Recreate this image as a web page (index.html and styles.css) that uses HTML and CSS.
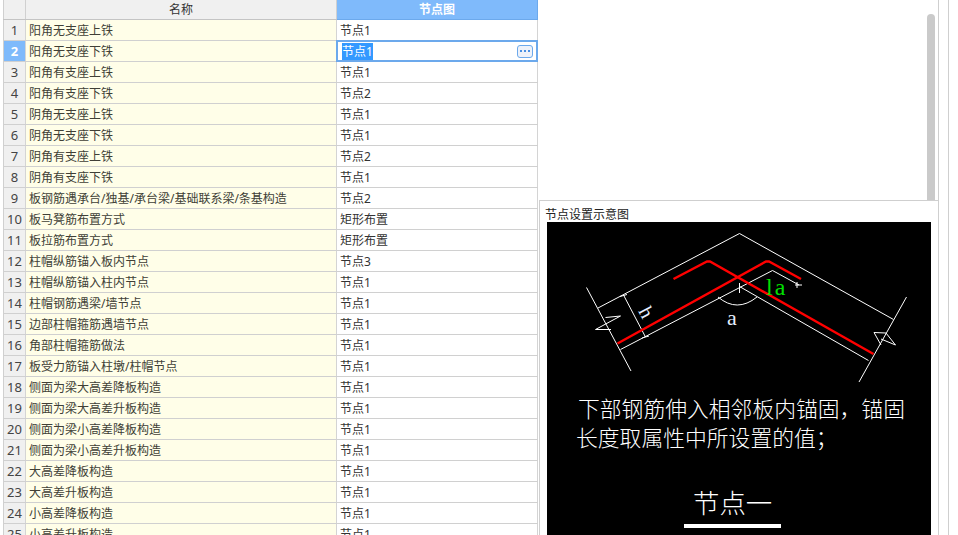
FILE: index.html
```html
<!DOCTYPE html>
<html lang="zh-CN">
<head>
    <meta charset="UTF-8">
    <title>节点设置</title>
    <link rel="stylesheet" href="styles.css">
</head>
<body>
    <div class="page">
        <table class="grid">
            <colgroup>
                <col class="col-num">
                <col class="col-name">
                <col class="col-node">
            </colgroup>
            <thead>
                <tr><th></th><th>名称</th><th class="active">节点图</th></tr>
            </thead>
            <tbody>
                <tr><td class="num">1</td><td class="name">阳角无支座上铁</td><td>节点1</td></tr>
                <tr>
                    <td class="num current">2</td>
                    <td class="name">阳角无支座下铁</td>
                    <td class="editing">
                        <div class="editor">
                            <span class="selected">节点1</span>
                            <span class="more"><i></i><i></i><i></i></span>
                        </div>
                    </td>
                </tr>
                <tr><td class="num">3</td><td class="name">阳角有支座上铁</td><td>节点1</td></tr>
                <tr><td class="num">4</td><td class="name">阳角有支座下铁</td><td>节点2</td></tr>
                <tr><td class="num">5</td><td class="name">阴角无支座上铁</td><td>节点1</td></tr>
                <tr><td class="num">6</td><td class="name">阴角无支座下铁</td><td>节点1</td></tr>
                <tr><td class="num">7</td><td class="name">阴角有支座上铁</td><td>节点2</td></tr>
                <tr><td class="num">8</td><td class="name">阴角有支座下铁</td><td>节点1</td></tr>
                <tr><td class="num">9</td><td class="name">板钢筋遇承台/独基/承台梁/基础联系梁/条基构造</td><td>节点2</td></tr>
                <tr><td class="num">10</td><td class="name">板马凳筋布置方式</td><td>矩形布置</td></tr>
                <tr><td class="num">11</td><td class="name">板拉筋布置方式</td><td>矩形布置</td></tr>
                <tr><td class="num">12</td><td class="name">柱帽纵筋锚入板内节点</td><td>节点3</td></tr>
                <tr><td class="num">13</td><td class="name">柱帽纵筋锚入柱内节点</td><td>节点1</td></tr>
                <tr><td class="num">14</td><td class="name">柱帽钢筋遇梁/墙节点</td><td>节点1</td></tr>
                <tr><td class="num">15</td><td class="name">边部柱帽箍筋遇墙节点</td><td>节点1</td></tr>
                <tr><td class="num">16</td><td class="name">角部柱帽箍筋做法</td><td>节点1</td></tr>
                <tr><td class="num">17</td><td class="name">板受力筋锚入柱墩/柱帽节点</td><td>节点1</td></tr>
                <tr><td class="num">18</td><td class="name">侧面为梁大高差降板构造</td><td>节点1</td></tr>
                <tr><td class="num">19</td><td class="name">侧面为梁大高差升板构造</td><td>节点1</td></tr>
                <tr><td class="num">20</td><td class="name">侧面为梁小高差降板构造</td><td>节点1</td></tr>
                <tr><td class="num">21</td><td class="name">侧面为梁小高差升板构造</td><td>节点1</td></tr>
                <tr><td class="num">22</td><td class="name">大高差降板构造</td><td>节点1</td></tr>
                <tr><td class="num">23</td><td class="name">大高差升板构造</td><td>节点1</td></tr>
                <tr><td class="num">24</td><td class="name">小高差降板构造</td><td>节点1</td></tr>
                <tr><td class="num">25</td><td class="name">小高差升板构造</td><td>节点1</td></tr>
            </tbody>
        </table>

        <div class="side">
            <div class="side-top">
                <div class="scroll-thumb"></div>
            </div>
            <div class="preview">
                <div class="preview-title">节点设置示意图</div>
                <svg class="drawing" viewBox="547 222 384 313" width="384" height="313">
                    <!-- slab outline -->
                    <g class="thin">
                        <polyline points="598,308 739.5,233.5 893.5,319.5"/>
                        <polyline points="620.5,349.5 772.5,270.5 799,285"/>
                        <polyline points="739.5,286.5 868.5,360.5"/>
                        <line x1="586.5" y1="287.5" x2="631" y2="371"/>
                        <line x1="906.5" y1="297" x2="859" y2="382"/>
                        <line x1="623.5" y1="295" x2="645.5" y2="337"/>
                        <polyline points="605.5,317.5 620.5,316 595.5,329.5 611,329.5"/>
                        <polyline points="881,345 874,332.5 886,333 895.5,345 881,339"/>
                        <path d="M718 297 Q737 313 757 297"/>
                        <line x1="620" y1="296.5" x2="627" y2="294.5"/>
                        <line x1="642" y1="338" x2="649" y2="336"/>
                        <line x1="795" y1="285" x2="802" y2="285"/>
                        <line x1="797" y1="282" x2="797" y2="288"/>
                        <line x1="739.5" y1="283" x2="739.5" y2="293"/>
                    </g>
                    <!-- rebar -->
                    <g class="rebar">
                        <polyline points="673.5,279 707,261.5 710,261.5 873.5,354"/>
                        <polyline points="617.5,343.5 766,261.5 769,261.5 801,279"/>
                    </g>
                    <text class="label" x="727" y="325">a</text>
                    <text class="label green" x="766" y="295">la</text>
                    <text class="label small" transform="translate(638 311) rotate(62)">h</text>
                    <text class="note" x="578" y="417">下部钢筋伸入相邻板内锚固，锚固</text>
                    <text class="note" x="576" y="446">长度取属性中所设置的值；</text>
                    <text class="title" x="693" y="513">节点一</text>
                    <rect class="bar" x="684" y="524" width="97" height="4"/>
                </svg>
            </div>
        </div>
        <div class="edge"></div>
    </div>
</body>
</html>
```

FILE: styles.css
```css
html, body {
    margin: 0;
    padding: 0;
    background: #fff;
}
.page {
    display: flex;
    align-items: flex-start;
    width: 958px;
    height: 535px;
    padding-left: 3px;
    box-sizing: border-box;
    overflow: hidden;
    font-family: "Noto Sans", "Noto Sans CJK SC", sans-serif;
    font-size: 12px;
    color: #333;
}

/* Grid */
.grid {
    flex: none;
    width: 535px;
    table-layout: fixed;
    border-collapse: collapse;
    border-left: 1px solid #d0d0d0;
}
.col-num {
    width: 22px;
}
.col-name {
    width: 311px;
}
.col-node {
    width: 201px;
}
.grid th {
    height: 19px;
    padding: 1px 0 0;
    background: #f0f0f0;
    border-right: 1px solid #d0d0d0;
    border-bottom: 1px solid #c4c4c4;
    font-weight: 400;
    line-height: 18px;
    box-sizing: border-box;
}
.grid th.active {
    background: #7fbafb;
    border-right-color: #6ca9ec;
    border-bottom-color: #6ca9ec;
    color: #fff;
    font-weight: 700;
}
.grid td {
    padding: 1px 0 0 3px;
    border-right: 1px solid #d4d4d4;
    border-bottom: 1px solid #d0d0d0;
    line-height: 19px;
    white-space: nowrap;
    overflow: hidden;
    box-sizing: content-box;
}
.grid tbody td {
    height: 19px;
}
.grid td.num {
    padding: 1px 0 0;
    background: #f0f0f0;
    text-align: center;
    font-size: 13px;
    color: #444;
}
.grid td.current {
    background: #7fbafb;
    color: #fff;
    font-weight: 700;
}
.grid td.name {
    background: #fffee8;
    color: #403f36;
}
.grid td.editing {
    padding: 0;
    overflow: visible;
    position: relative;
}
/* sits over the cell borders, so it is pulled out of the cell */
.editor {
    position: absolute;
    top: -1px;
    left: -1px;
    right: -1px;
    display: flex;
    align-items: center;
    justify-content: space-between;
    height: 18px;
    padding: 0 3px 0 4px;
    border: 2px solid #6ca9ec;
    background: #fff;
    line-height: 17px;
}
.selected {
    background: #3399ff;
    color: #fff;
}
.more {
    display: flex;
    align-items: center;
    justify-content: center;
    gap: 2px;
    width: 14px;
    height: 11px;
    background: #eef2fa;
    border: 1px solid #6ca9ec;
    border-radius: 3px;
}
.more i {
    width: 2px;
    height: 2px;
    background: #4a90e2;
}

/* Right side */
.side {
    flex: none;
    width: 400px;
    margin-left: 1px;
}
.side-top {
    display: flex;
    justify-content: flex-end;
    height: 200px;
    padding: 14px 3px 0 0;
    border-right: 1px solid #cfcfcf;
    box-sizing: border-box;
}
.scroll-thumb {
    width: 8px;
    height: 186px;
    background: #cacaca;
    border-radius: 4px 4px 0 0;
}
.preview {
    height: 335px;
    border: 1px solid #cfcfcf;
    border-width: 1px 1px 0 1px;
    box-sizing: border-box;
}
.preview-title {
    height: 15px;
    padding: 5px 0 0 5px;
    line-height: 17px;
    color: #222;
}
.drawing {
    display: block;
    margin: 1px 0 0 7px;
    background: #000;
}
.thin {
    fill: none;
    stroke: #fff;
    stroke-width: 1;
}
.rebar {
    fill: none;
    stroke: #ff0000;
    stroke-width: 2.4;
}
.label {
    font-family: "Liberation Serif", serif;
    font-size: 22px;
    fill: #e6efff;
}
.green {
    font-size: 24px;
    letter-spacing: 2px;
    fill: #00e000;
}
.small {
    font-size: 20px;
}
.note {
    font-family: "Noto Sans CJK SC", sans-serif;
    font-size: 21.8px;
    font-weight: 300;
    fill: #fff;
}
.title {
    font-family: "Noto Sans CJK SC", sans-serif;
    font-size: 26.4px;
    font-weight: 300;
    fill: #fff;
}
.bar {
    fill: #fff;
}
.edge {
    flex: none;
    width: 10px;
    height: 535px;
    border-right: 1px solid #cfcfcf;
    box-sizing: border-box;
}
```
